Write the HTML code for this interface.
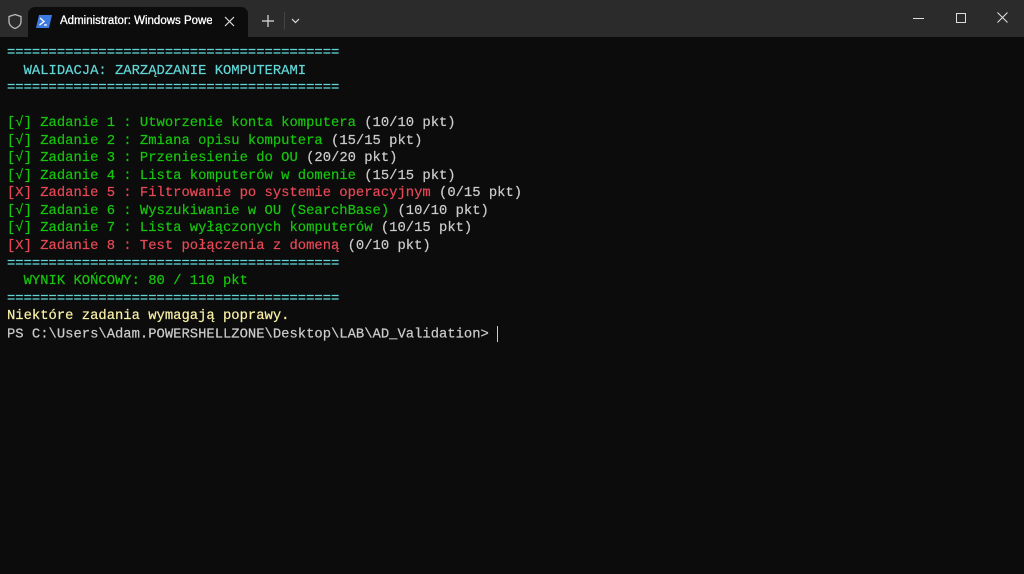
<!DOCTYPE html>
<html><head><meta charset="utf-8"><style>
body{margin:0;width:1024px;height:574px;background:#0c0c0c;overflow:hidden;position:relative;font-family:"Liberation Sans",sans-serif}
.tb{position:absolute;left:0;top:0;width:1024px;height:37px;background:#2b2b2b}
.tab{position:absolute;left:28px;top:7px;width:220px;height:30px;background:#0c0c0c;border-radius:7px 7px 0 0}
.tab span{position:absolute;left:32px;top:8px;color:#fff;font-size:11.5px;white-space:nowrap;width:152px;overflow:hidden;-webkit-text-stroke:0.3px #fff}
.term{position:absolute;left:7px;top:45px;font-family:"Liberation Mono",monospace;font-size:13.85px;line-height:17.55px;white-space:pre;color:#cccccc;-webkit-text-stroke:0.2px currentColor}
.c{color:#61d6d6}.g{color:#16c60c}.r{color:#e74856}.y{color:#f9f1a5}
</style></head><body>
<div class="tb">
<svg style="position:absolute;left:7px;top:13px" width="16" height="17" viewBox="0 0 16 17"><path d="M8 1.5L14 3.5V8.5C14 12 11 14.5 8 15.5C5 14.5 2 12 2 8.5V3.5Z" fill="none" stroke="#bbb" stroke-width="1.3"/></svg>
<div class="tab">
<svg style="position:absolute;left:8px;top:8px" width="16" height="13" viewBox="0 0 16 13"><path d="M3 0H16L13 13H0Z" fill="#3d7be0"/><path d="M4 3L8 6.5L3.5 10" stroke="#fff" stroke-width="1.4" fill="none"/><path d="M8 10H11" stroke="#fff" stroke-width="1.3"/></svg>
<span>Administrator: Windows PowerShell</span>
<svg style="position:absolute;left:196px;top:9px" width="11" height="11"><path d="M1 1L10 10M10 1L1 10" stroke="#ddd" stroke-width="1.2"/></svg>
</div>
<svg style="position:absolute;left:262px;top:15px" width="12" height="12"><path d="M6 0V12M0 6H12" stroke="#ddd" stroke-width="1.2"/></svg>
<div style="position:absolute;left:284px;top:12px;width:1px;height:18px;background:#444"></div>
<svg style="position:absolute;left:291px;top:18px" width="9" height="6"><path d="M1 1L4.5 4.5L8 1" stroke="#ddd" stroke-width="1.2" fill="none"/></svg>
<div style="position:absolute;left:913px;top:18px;width:11px;height:1px;background:#ddd"></div>
<div style="position:absolute;left:956px;top:13px;width:8px;height:8px;border:1px solid #ddd"></div>
<svg style="position:absolute;left:997px;top:12px" width="11" height="11"><path d="M0.5 0.5L10.5 10.5M10.5 0.5L0.5 10.5" stroke="#ddd" stroke-width="1.1"/></svg>
</div>
<div class="term"><span class="c">========================================
  WALIDACJA: ZARZĄDZANIE KOMPUTERAMI
========================================</span>

<span class="g">[√] Zadanie 1 : Utworzenie konta komputera</span> (10/10 pkt)
<span class="g">[√] Zadanie 2 : Zmiana opisu komputera</span> (15/15 pkt)
<span class="g">[√] Zadanie 3 : Przeniesienie do OU</span> (20/20 pkt)
<span class="g">[√] Zadanie 4 : Lista komputerów w domenie</span> (15/15 pkt)
<span class="r">[X] Zadanie 5 : Filtrowanie po systemie operacyjnym</span> (0/15 pkt)
<span class="g">[√] Zadanie 6 : Wyszukiwanie w OU (SearchBase)</span> (10/10 pkt)
<span class="g">[√] Zadanie 7 : Lista wyłączonych komputerów</span> (10/15 pkt)
<span class="r">[X] Zadanie 8 : Test połączenia z domeną</span> (0/10 pkt)
<span class="c">========================================</span>
<span class="g">  WYNIK KOŃCOWY: 80 / 110 pkt</span>
<span class="c">========================================</span>
<span class="y">Niektóre zadania wymagają poprawy.</span>
PS C:\Users\Adam.POWERSHELLZONE\Desktop\LAB\AD_Validation> <span style="display:inline-block;width:1px;height:16px;background:#ccc;vertical-align:middle"></span></div>
</body></html>
